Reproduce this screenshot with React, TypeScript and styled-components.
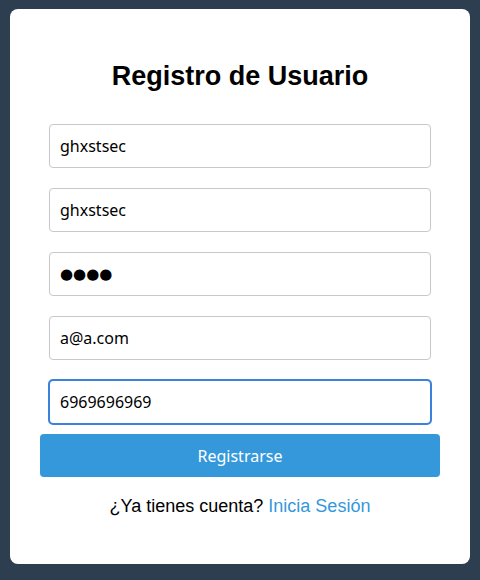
import React from "react";
import styled, { createGlobalStyle } from "styled-components";

const Global = createGlobalStyle`
  html, body { margin: 0; padding: 0; }
  body {
    background: #2c3e50;
    width: 480px;
    height: 580px;
    font-family: "Liberation Sans", Arial, sans-serif;
  }
  * { box-sizing: border-box; }
`;

const Page = styled.div`
  padding: 9px 10px 16px 10px;
  height: 580px;
`;

const Card = styled.form`
  background: #ffffff;
  border-radius: 8px;
  height: 555px;
  padding: 51px 30px 0 30px;
  display: flex;
  flex-direction: column;
  align-items: center;
`;

const Title = styled.h2`
  margin: 0 0 32px 0;
  font-family: "Liberation Sans", Arial, sans-serif;
  font-weight: bold;
  font-size: 27px;
  line-height: 32px;
  color: #000;
  text-align: center;
`;

const Fields = styled.div`
  display: flex;
  flex-direction: column;
  gap: 20px;
  width: 382px;
`;

const Input = styled.input<{ $focused?: boolean; $masked?: boolean }>`
  width: 100%;
  height: 44px;
  padding: 0 10px;
  border: 1px solid #c8c8c8;
  border-radius: 4px;
  font-family: ${(p) =>
    p.$masked ? '"DejaVu Sans", sans-serif' : '"Noto Sans", "Open Sans", sans-serif'};
  font-size: ${(p) => (p.$masked ? "15px" : "16px")};
  color: #000;
  background: #fff;
  outline: ${(p) => (p.$focused ? "2px solid #3b82dc" : "none")};
  outline-offset: -1px;
`;

const Button = styled.button`
  margin-top: 10px;
  width: 400px;
  height: 43px;
  border: none;
  border-radius: 4px;
  background: #3498db;
  color: #fff;
  font-family: "Noto Sans", "Open Sans", sans-serif;
  font-size: 16px;
  cursor: pointer;
`;

const Footer = styled.p`
  margin: 19px 0 0 0;
  font-family: "Liberation Sans", Arial, sans-serif;
  font-size: 18px;
  line-height: 21px;
  color: #000;
`;

const Link = styled.a`
  color: #3498db;
  text-decoration: none;
`;

export default function App() {
  return (
    <>
      <Global />
      <Page>
        <Card onSubmit={(e) => e.preventDefault()}>
          <Title>Registro de Usuario</Title>
          <Fields>
            <Input type="text" defaultValue="ghxstsec" />
            <Input type="text" defaultValue="ghxstsec" />
            <Input type="text" defaultValue={"\u25CF\u25CF\u25CF\u25CF"} readOnly $masked />
            <Input type="email" defaultValue="a@a.com" />
            <Input type="tel" defaultValue="6969696969" $focused />
          </Fields>
          <Button type="submit">Registrarse</Button>
          <Footer>
            ¿Ya tienes cuenta? <Link href="#">Inicia Sesión</Link>
          </Footer>
        </Card>
      </Page>
    </>
  );
}
